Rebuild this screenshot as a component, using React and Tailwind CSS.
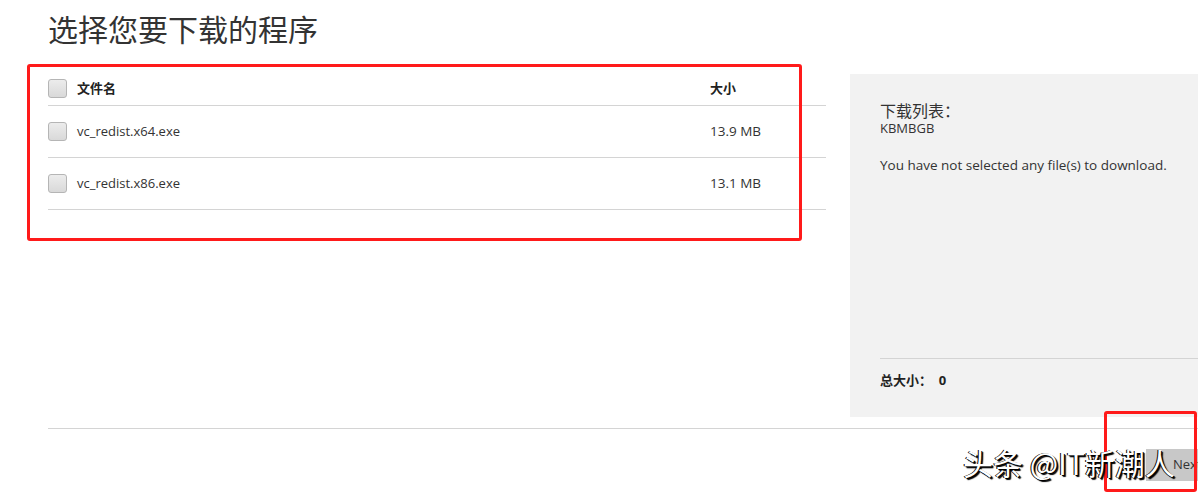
export default function App() {
  const rows = [
    { name: "vc_redist.x64.exe", size: "13.9 MB" },
    { name: "vc_redist.x86.exe", size: "13.1 MB" },
  ];
  const font = { fontFamily: '"Open Sans", "Noto Sans CJK SC", sans-serif' };
  const Box = () => (
    <div className="w-[19px] h-[19px] shrink-0 rounded-[3px] border border-[#b5b5b5] bg-gradient-to-b from-[#ececec] to-[#d9d9d9]" />
  );
  return (
    <div className="relative w-[1198px] h-[495px] overflow-hidden bg-white text-[#333]" style={font}>
      <h1 className="pl-[48px] pt-[10px] h-[64px] text-[30px] leading-[40px] font-normal text-[#333]">选择您要下载的程序</h1>
      <div className="flex pl-[48px] gap-[24px]">
        <div className="w-[778px] pt-[8px]">
          <div className="flex items-center h-[34px] border-b border-[#d4d4d4]">
            <Box />
            <div className="ml-[10px] w-[633px] text-[13px] font-bold text-[#222]">文件名</div>
            <div className="text-[13px] font-bold text-[#222]">大小</div>
          </div>
          {rows.map((r) => (
            <div key={r.name} className="flex items-center h-[52px] border-b border-[#d4d4d4]">
              <Box />
              <div className="ml-[10px] w-[633px] text-[13px]">{r.name}</div>
              <div className="text-[13.5px]">{r.size}</div>
            </div>
          ))}
        </div>
        <div className="w-[348px] h-[343px] mt-[10px] bg-[#f2f2f2] pl-[30px] pt-[28px] flex flex-col">
          <div className="text-[16px] leading-[19px] text-[#333]">下载列表：</div>
          <div className="text-[13px] leading-[15px] text-[#333]">KBMBGB</div>
          <div className="mt-[19px] text-[13.5px] text-[#333]">You have not selected any file(s) to download.</div>
          <div className="mt-auto border-t border-[#d4d4d4] pt-[12px] h-[59px] text-[13px] font-bold text-[#222]">
            总大小：&nbsp;&nbsp;0
          </div>
        </div>
      </div>
      <div className="ml-[48px] mt-[11px] border-t border-[#d4d4d4]" />
      <div className="flex justify-end mt-[20px]">
        <div className="w-[52px] h-[32px] bg-[#c8c8c8] pl-[27px] flex items-center text-[13px] text-[#333] overflow-hidden whitespace-nowrap">Next</div>
      </div>

      <div className="absolute left-[27px] top-[64px] w-[775px] h-[177px] border-[3px] border-[#ff1a1a] rounded-[3px]" />
      <div className="absolute left-[1104px] top-[411px] w-[93px] h-[81px] border-[3px] border-[#ff1a1a] rounded-[3px]" />
      <div
        className="absolute left-[963px] top-[442px] text-[30px] leading-[40px] text-white whitespace-nowrap"
        style={{ fontFamily: '"Noto Sans CJK SC", sans-serif', textShadow: "1px 1px 0 #000, 2px 2px 1px #000, -1px 0 0 #000" }}
      >
        头条 @IT新潮人
      </div>
    </div>
  );
}
